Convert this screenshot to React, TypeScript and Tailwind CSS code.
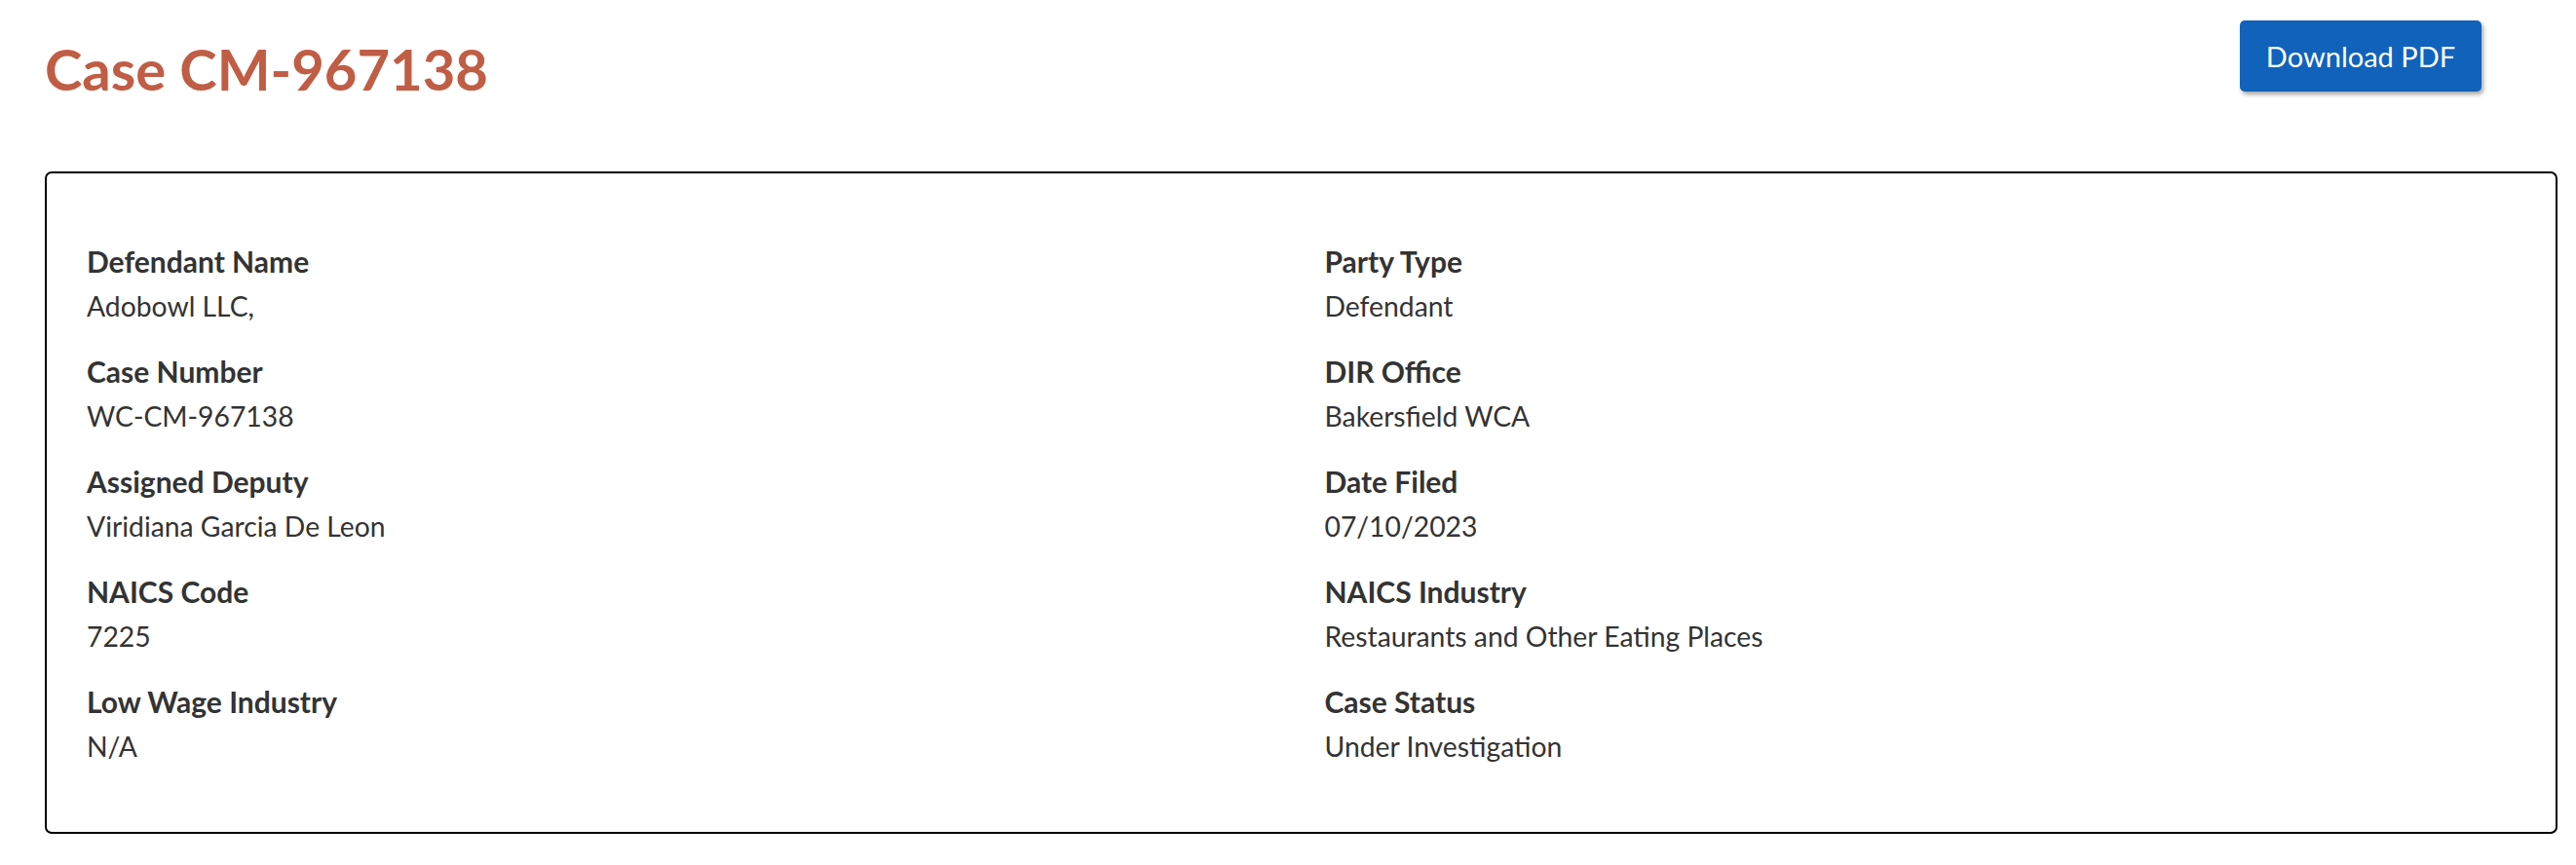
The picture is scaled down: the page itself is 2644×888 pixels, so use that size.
export default function App() {
  const left = [
    { label: 'Defendant Name', value: 'Adobowl LLC,' },
    { label: 'Case Number', value: 'WC-CM-967138' },
    { label: 'Assigned Deputy', value: 'Viridiana Garcia De Leon' },
    { label: 'NAICS Code', value: '7225' },
    { label: 'Low Wage Industry', value: 'N/A' },
  ]
  const right = [
    { label: 'Party Type', value: 'Defendant' },
    { label: 'DIR Office', value: 'Bakersfield WCA' },
    { label: 'Date Filed', value: '07/10/2023' },
    { label: 'NAICS Industry', value: 'Restaurants and Other Eating Places' },
    { label: 'Case Status', value: 'Under Investigation' },
  ]
  const fields = left.flatMap((l, i) => [l, right[i]])

  return (
    <div className="min-h-screen bg-white pl-[46px] pr-[19px] pt-[21px] font-['Lato',sans-serif] text-[#333333]">
      <div className="flex justify-between items-start">
        <h1 className="mt-[21px] text-[58px] leading-[58px] font-bold text-[#c05d45]">Case CM-967138</h1>
        <button className="mr-[78px] w-[248px] h-[73px] flex items-center justify-center rounded-[5px] bg-[#1062bb] text-white text-[29px] shadow-[2px_3px_4px_rgba(0,0,0,0.35)]">
          Download PDF
        </button>
      </div>

      {/* Case details card */}
      <div className="mt-[76px] border-2 border-black rounded-[7px] px-[41px] pt-[67px] pb-[65px]">
        <div className="grid grid-cols-2 gap-x-[48px] gap-y-[21px]">
          {fields.map((f, idx) => (
            <div key={idx}>
              <div className="text-[30px] leading-[46px] font-bold">{f.label}</div>
              <div className="text-[28.3px] leading-[46px]">{f.value}</div>
            </div>
          ))}
        </div>
      </div>
    </div>
  )
}
